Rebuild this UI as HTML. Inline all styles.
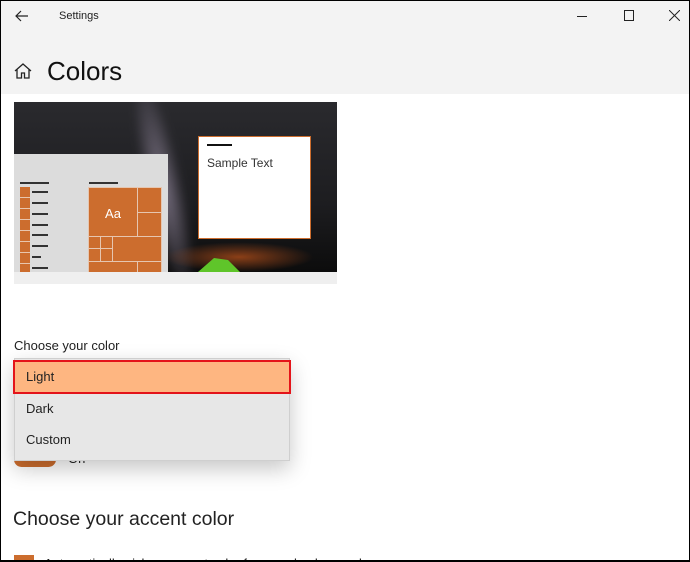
<!DOCTYPE html>
<html><head><style>
*{margin:0;padding:0;box-sizing:border-box}
html,body{width:690px;height:562px;overflow:hidden}
body{background:#fff;font-family:"Liberation Sans",sans-serif;position:relative;color:#000}
.frame{position:absolute;left:0;top:0;width:690px;height:562px;border:1px solid #000;z-index:50;pointer-events:none;border-bottom-width:2px}
.hdr{position:absolute;left:0;top:0;width:690px;height:94px;background:#f3f3f3}
.abs{position:absolute}
.bar{position:absolute;height:2px;background:#333}
.tile{position:absolute;background:#cc6d2e}
</style></head><body>
<div class="hdr"></div>
<svg class="abs" style="left:14px;top:9px" width="16" height="14" viewBox="0 0 16 14"><path d="M14 7H2M7 2L2 7l5 5" stroke="#222" stroke-width="1.2" fill="none"/></svg>
<div class="abs" style="left:59px;top:10px;font-size:11px;color:#222">Settings</div>
<div class="abs" style="left:577px;top:16px;width:10px;height:1px;background:#222"></div>
<div class="abs" style="left:624px;top:10px;width:10px;height:11px;border:1px solid #222"></div>
<svg class="abs" style="left:669px;top:10px" width="11" height="11"><path d="M0 0L11 11M11 0L0 11" stroke="#222" stroke-width="1"/></svg>
<svg class="abs" style="left:13px;top:61px" width="20" height="20" viewBox="0 0 20 20"><path d="M2 10L10 3l8 7M4 8.5V17h4.5v-5h3v5H16V8.5" stroke="#222" stroke-width="1.3" fill="none"/></svg>
<div class="abs" style="left:47px;top:56px;font-size:26px;color:#111">Colors</div>

<div class="abs" style="left:14px;top:102px;width:323px;height:182px;background:#efefef"></div>
<div class="abs" style="left:14px;top:102px;width:323px;height:170px;overflow:hidden;background:linear-gradient(#2a2a2e,#1d1d20 60%,#0c0c0c)">
  <div class="abs" style="left:130px;top:-30px;width:40px;height:230px;background:radial-gradient(ellipse at center,rgba(140,130,150,.8),transparent 70%);transform:rotate(-12deg);filter:blur(4px)"></div>
  <div class="abs" style="left:150px;top:140px;width:150px;height:30px;background:radial-gradient(ellipse at center,rgba(170,75,25,.8),transparent 70%)"></div>
  <svg class="abs" style="left:180px;top:150px" width="50" height="20"><path d="M4 20 L20 6 L34 8 L46 20Z" fill="#5fc52a"/></svg>
</div>
<div class="abs" style="left:14px;top:154px;width:154px;height:118px;background:#dcdcdc"></div>
<div class="bar" style="left:20px;top:182px;width:29px"></div>
<div class="bar" style="left:89px;top:182px;width:29px"></div>
<div class="tile" style="left:20px;top:187px;width:10px;height:85px;background:repeating-linear-gradient(#cc6d2e 0 10px,#e8c6ae 10px 11px)"></div>
<div class="bar" style="left:32px;top:191px;width:16px"></div>
<div class="bar" style="left:32px;top:202px;width:16px"></div>
<div class="bar" style="left:32px;top:213px;width:16px"></div>
<div class="bar" style="left:32px;top:224px;width:16px"></div>
<div class="bar" style="left:32px;top:234px;width:16px"></div>
<div class="bar" style="left:32px;top:245px;width:16px"></div>
<div class="bar" style="left:32px;top:256px;width:9px"></div>
<div class="bar" style="left:32px;top:267px;width:16px"></div>
<div class="abs" style="left:88px;top:187px;width:74px;height:85px;background:#e6c6b0"></div>
<div class="tile" style="left:89px;top:188px;width:48px;height:48px;color:#fff;font-size:13px;text-align:center;line-height:52px">Aa</div>
<div class="tile" style="left:138px;top:188px;width:23px;height:24px"></div>
<div class="tile" style="left:138px;top:213px;width:23px;height:23px"></div>
<div class="tile" style="left:89px;top:237px;width:11px;height:11px"></div>
<div class="tile" style="left:101px;top:237px;width:11px;height:11px"></div>
<div class="tile" style="left:89px;top:249px;width:11px;height:12px"></div>
<div class="tile" style="left:101px;top:249px;width:11px;height:12px"></div>
<div class="tile" style="left:113px;top:237px;width:48px;height:24px"></div>
<div class="tile" style="left:89px;top:262px;width:48px;height:10px"></div>
<div class="tile" style="left:138px;top:262px;width:23px;height:10px"></div>
<div class="abs" style="left:198px;top:136px;width:113px;height:103px;background:#fff;border:1px solid #cc6d2e"></div>
<div class="abs" style="left:207px;top:144px;width:25px;height:2px;background:#111"></div>
<div class="abs" style="left:207px;top:156px;font-size:12px;color:#333">Sample Text</div>

<div class="abs" style="left:14px;top:338px;font-size:13px;color:#222">Choose your color</div>
<div class="abs" style="left:14px;top:452px;width:42px;height:15px;background:#cc6d2e;border-radius:8px"></div>
<div class="abs" style="left:68px;top:451px;font-size:13px;color:#222">On</div>
<div class="abs" style="left:14px;top:358px;width:276px;height:103px;background:#e7e7e7;border:1px solid #cfcfcf;box-shadow:0 8px 20px rgba(0,0,0,.22)"></div>
<div class="abs" style="left:13px;top:360px;width:278px;height:34px;background:#feb681;border:2px solid #e4141a"></div>
<div class="abs" style="left:26px;top:369px;font-size:13px;color:#222">Light</div>
<div class="abs" style="left:26px;top:401px;font-size:13px;color:#222">Dark</div>
<div class="abs" style="left:26px;top:432px;font-size:13px;color:#222">Custom</div>

<div class="abs" style="left:13px;top:508px;font-size:19.5px;color:#222">Choose your accent color</div>
<div class="abs" style="left:14px;top:555px;width:20px;height:20px;background:#cc6d2e"></div>
<div class="abs" style="left:44px;top:556px;font-size:13px;color:#222">Automatically pick an accent color from my background</div>
<div class="frame"></div>
</body></html>
